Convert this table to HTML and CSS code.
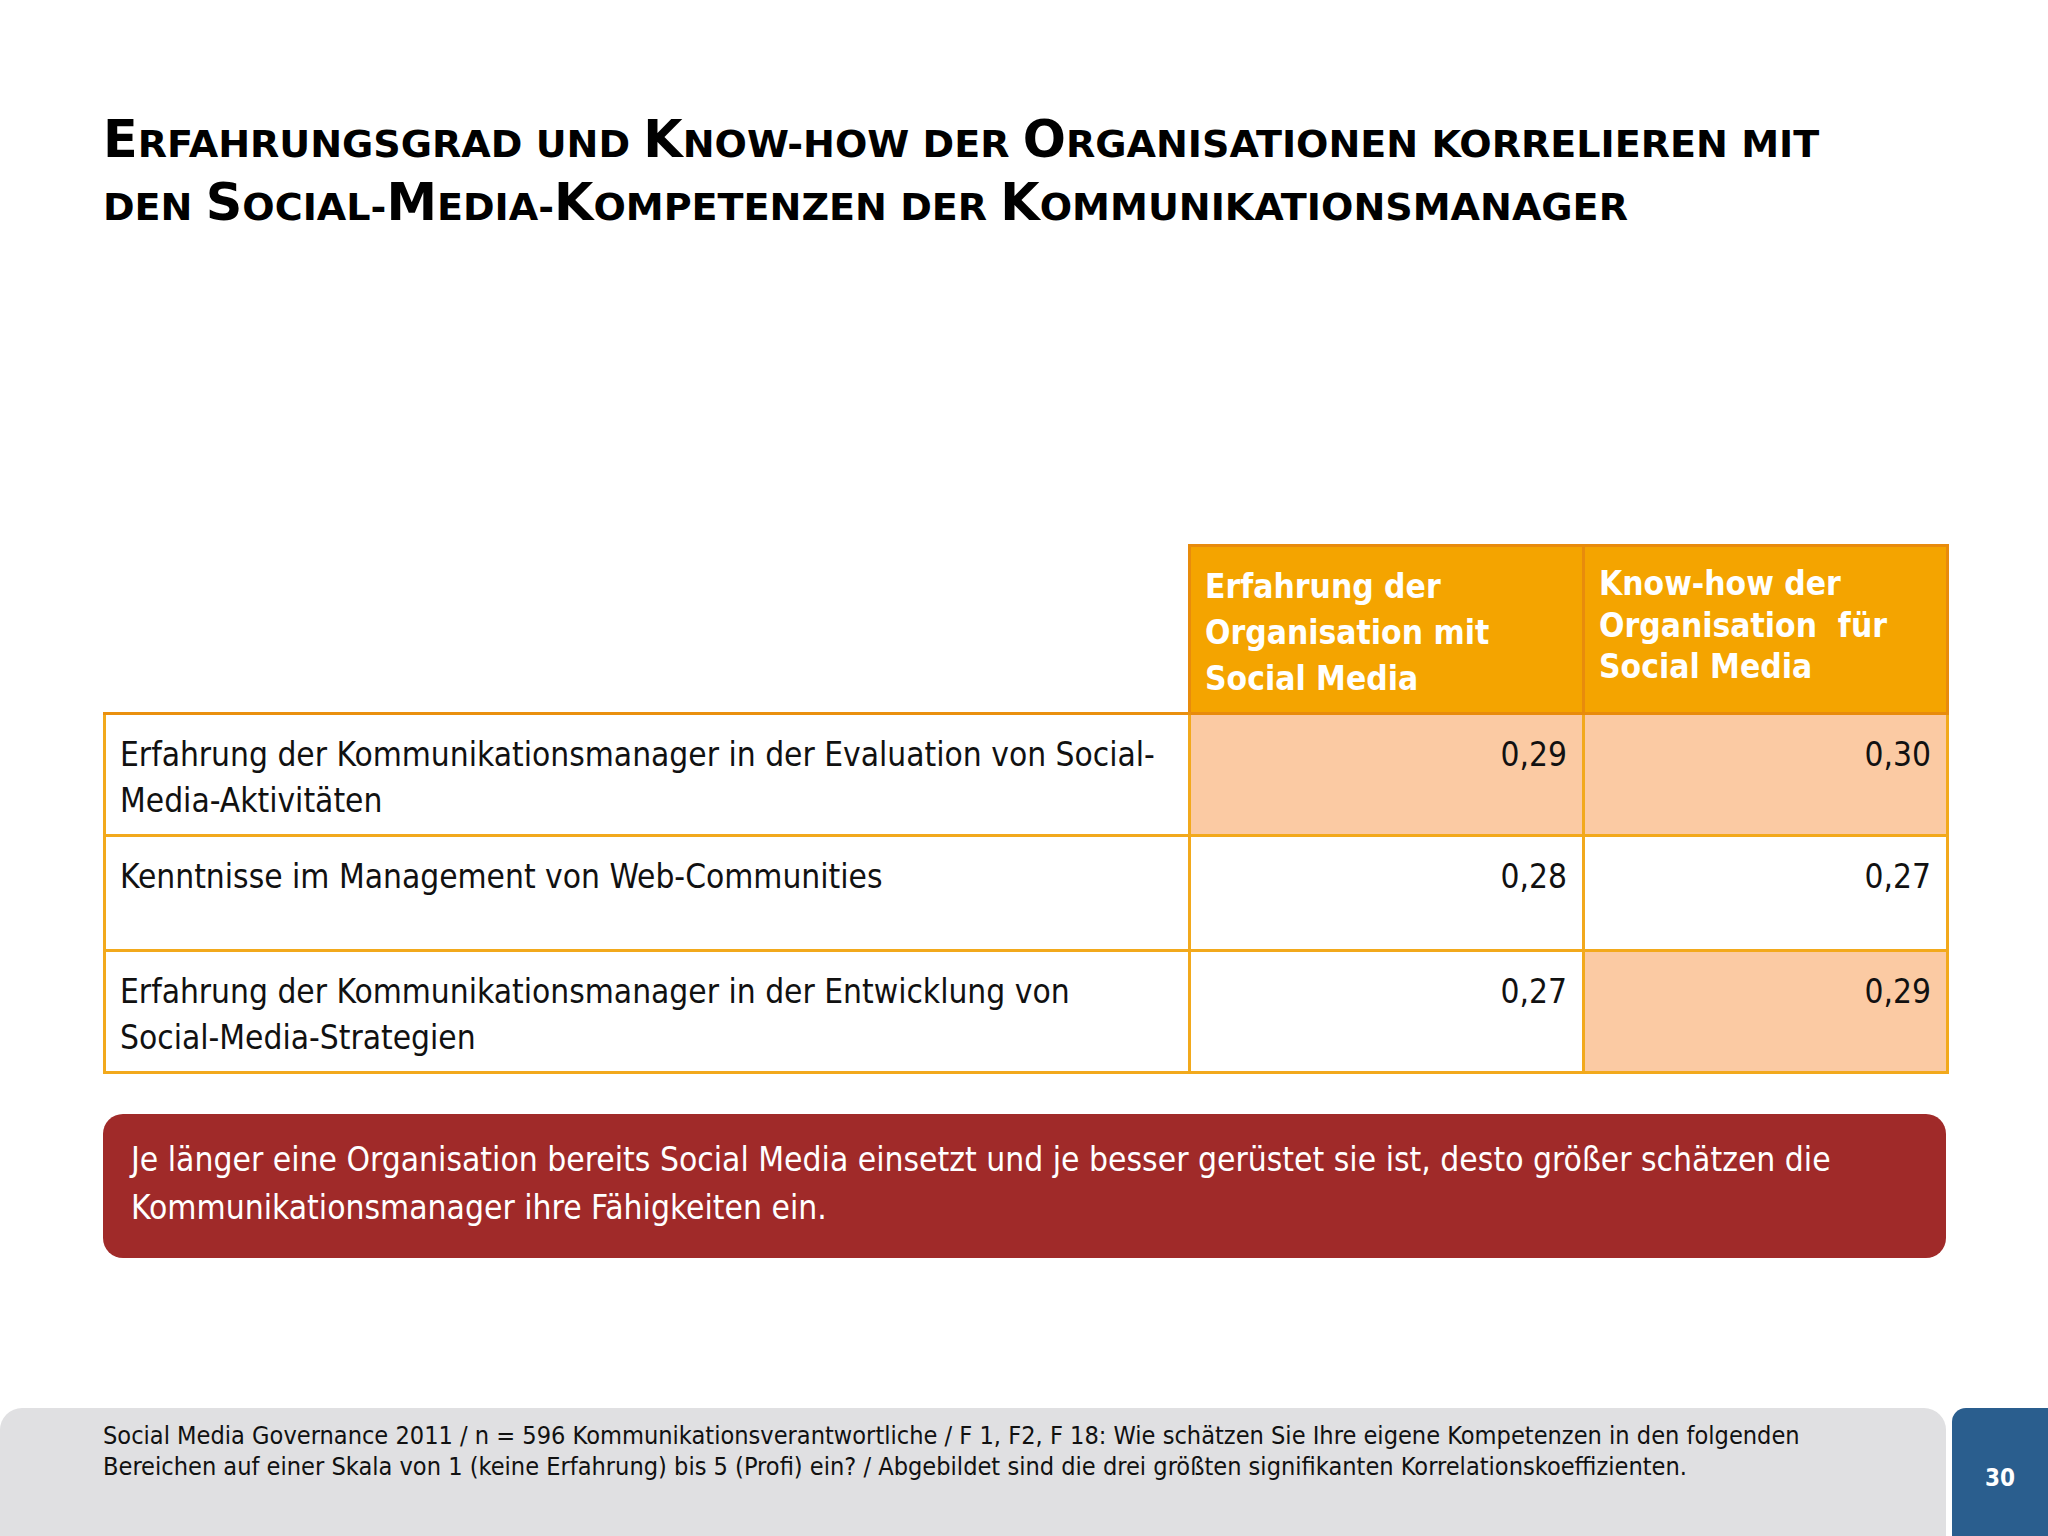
FILE: index.html
```html
<!DOCTYPE html>
<html lang="de">
<head>
<meta charset="utf-8">
<title>Erfahrungsgrad und Know-how</title>
<link rel="stylesheet" href="styles.css">
</head>
<body>
<div class="slide">
  <main class="content">
    <h1 class="title"><span class="cap">E</span>rfahrungsgrad und <span class="cap">K</span>now-how der <span class="cap">O</span>rganisationen korrelieren mit<br>den <span class="cap">S</span>ocial-<span class="cap">M</span>edia-<span class="cap">K</span>ompetenzen der <span class="cap">K</span>ommunikationsmanager</h1>

    <table class="corr">
      <colgroup>
        <col class="c-label">
        <col class="c-v1">
        <col class="c-v2">
      </colgroup>
      <thead>
        <tr class="head-row">
          <th class="blank"></th>
          <th class="h h1">Erfahrung der<br>Organisation mit<br>Social Media</th>
          <th class="h h2">Know-how der<br>Organisation&nbsp; für<br>Social Media</th>
        </tr>
      </thead>
      <tbody>
        <tr class="r-tall">
          <td class="label">Erfahrung der Kommunikationsmanager in der Evaluation von Social-Media-Aktivitäten</td>
          <td class="val hi">0,29</td>
          <td class="val hi">0,30</td>
        </tr>
        <tr class="r-short">
          <td class="label">Kenntnisse im Management von Web-Communities</td>
          <td class="val">0,28</td>
          <td class="val">0,27</td>
        </tr>
        <tr class="r-tall">
          <td class="label">Erfahrung der Kommunikationsmanager in der Entwicklung von Social-Media-Strategien</td>
          <td class="val">0,27</td>
          <td class="val hi">0,29</td>
        </tr>
      </tbody>
    </table>

    <div class="callout">Je länger eine Organisation bereits Social Media einsetzt und je besser gerüstet sie ist, desto größer schätzen die Kommunikationsmanager ihre Fähigkeiten ein.</div>
  </main>

  <footer class="footer">
    <div class="source">Social Media Governance 2011 / n = 596 Kommunikationsverantwortliche / F 1, F2, F 18: Wie schätzen Sie Ihre eigene Kompetenzen in den folgenden Bereichen auf einer Skala von 1 (keine Erfahrung) bis 5 (Profi) ein? / Abgebildet sind die drei größten signifikanten Korrelationskoeffizienten.</div>
    <div class="pagenum">30</div>
  </footer>
</div>
</body>
</html>
```

FILE: styles.css
```css
html, body {
  margin: 0;
  padding: 0;
  background: #ffffff;
}

.slide {
  width: 2048px;
  height: 1536px;
  display: flex;
  flex-direction: column;
  background: #ffffff;
  overflow: hidden;
}

.content {
  flex: 1;
  padding: 113px 102px 0 103px;
}

.title {
  margin: 0;
  font-family: "DejaVu Sans", Verdana, sans-serif;
  font-weight: bold;
  font-size: 38.1px;
  line-height: 63px;
  text-transform: uppercase;
  color: #000000;
  white-space: nowrap;
}

.title .cap {
  font-size: 50.8px;
  line-height: 1;
}

.corr {
  margin-top: 305px;
  width: 1843px;
  border-collapse: collapse;
  table-layout: fixed;
  font-family: "DejaVu Sans Condensed", Tahoma, sans-serif;
}

.c-label { width: 1085px; }
.c-v1 { width: 394px; }
.c-v2 { width: 364px; }

.head-row { height: 168px; }

.blank {
  border: none;
  border-bottom: 3px solid #ea900e;
  padding: 0;
}

.h {
  background: #f4a400;
  border: 3px solid #e88b0c;
  color: #ffffff;
  font-weight: bold;
  font-size: 33.3px;
  text-align: left;
  vertical-align: top;
  padding: 0 8px 0 14px;
  white-space: nowrap;
}

.h1 {
  line-height: 46px;
  padding-top: 17px;
}

.h2 {
  line-height: 41.5px;
  padding-top: 16px;
}

.r-tall { height: 122px; }
.r-short { height: 115px; }

.corr td {
  border: 3px solid #f2a91c;
  vertical-align: top;
  font-size: 33.2px;
  line-height: 46px;
  color: #111111;
  padding-top: 17px;
  background: #ffffff;
}

.corr td.label {
  padding-left: 14px;
  padding-right: 21px;
}

.corr td.val {
  text-align: right;
  padding-right: 15px;
}

.corr td.hi {
  background: #fbcaa3;
}

.callout {
  margin-top: 40px;
  width: 1843px;
  box-sizing: border-box;
  height: 144px;
  background: #a02a29;
  border-radius: 20px;
  color: #ffffff;
  font-family: "DejaVu Sans Condensed", Tahoma, sans-serif;
  font-size: 33.3px;
  line-height: 47.5px;
  padding: 22px 40px 0 28px;
}

.footer {
  height: 128px;
  display: flex;
  align-items: stretch;
  gap: 6px;
}

.source {
  flex: 1;
  background: #e0e0e2;
  border-radius: 22px 22px 0 0;
  padding: 12px 110px 0 103px;
  font-family: "DejaVu Sans Condensed", Tahoma, sans-serif;
  font-size: 25.1px;
  line-height: 31px;
  color: #111111;
}

.pagenum {
  width: 96px;
  background: #2a5e8e;
  border-radius: 14px 0 0 0;
  color: #ffffff;
  font-family: "DejaVu Sans Condensed", Tahoma, sans-serif;
  font-weight: bold;
  font-size: 24px;
  display: flex;
  align-items: center;
  justify-content: center;
  padding-top: 12px;
  box-sizing: border-box;
}
```
